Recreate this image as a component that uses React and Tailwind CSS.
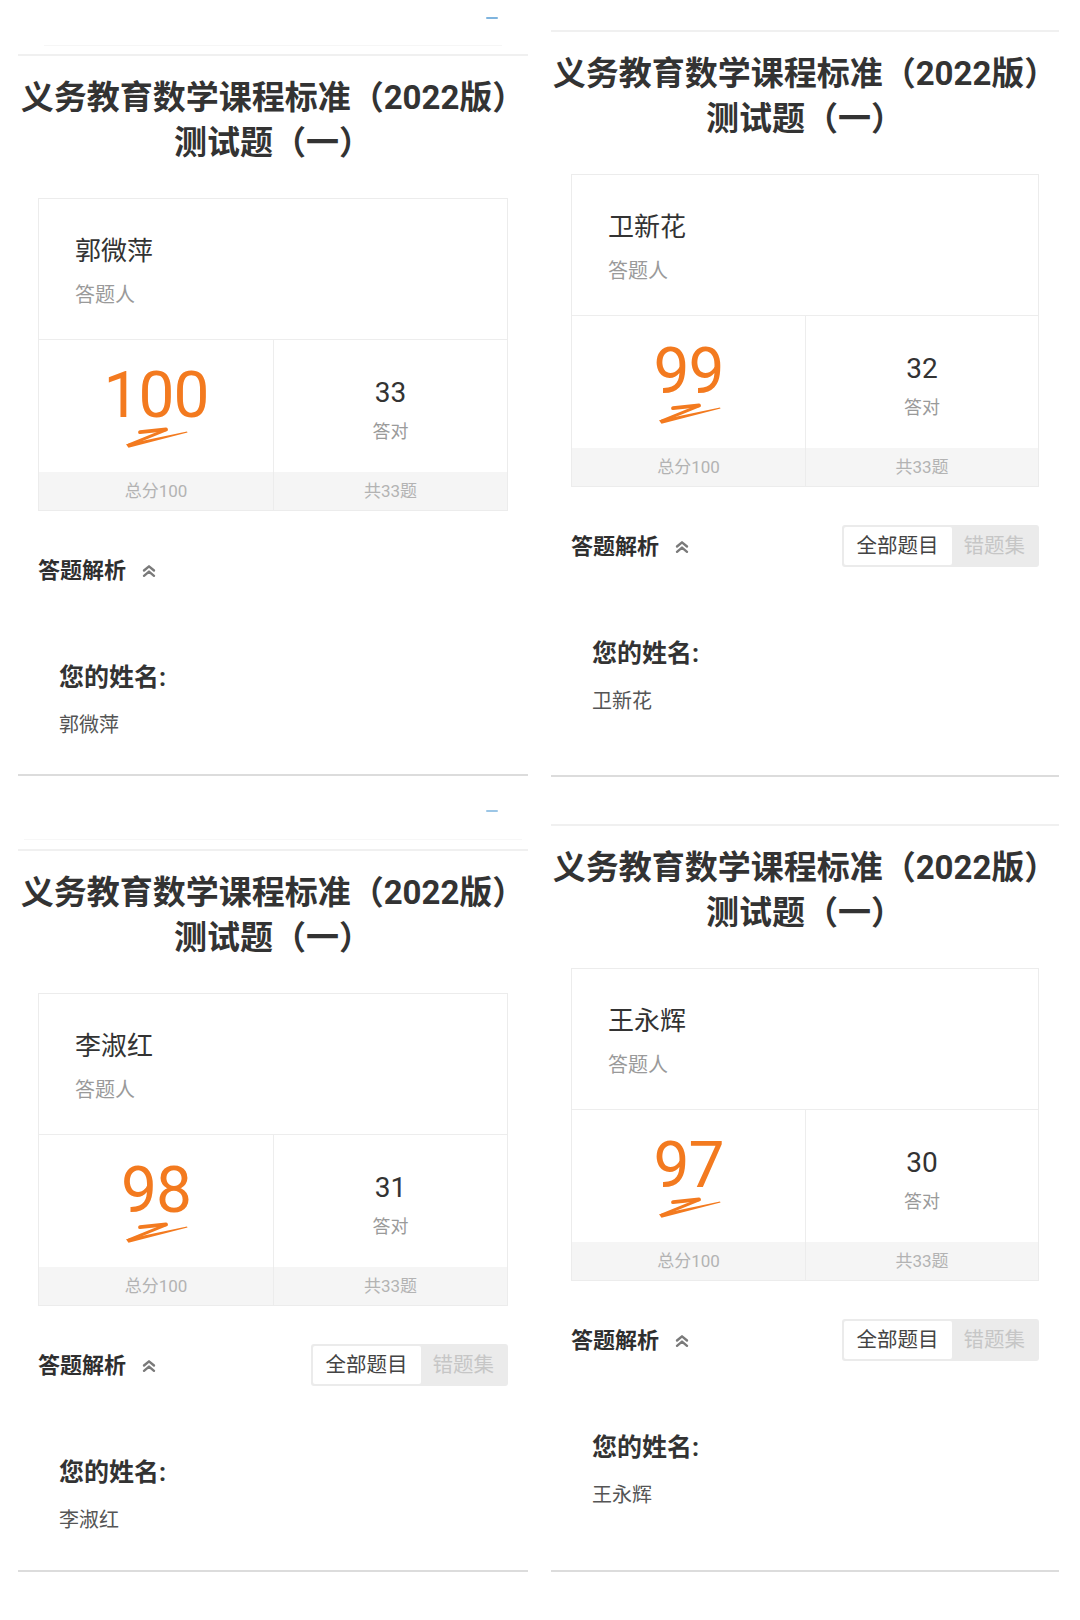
import React from "react";

const ORANGE = "#f37a1f";

// Orange tick under the score
function Scribble() {
    return (
        <svg width="66" height="24" viewBox="0 0 66 24" className="mx-auto -mt-[3px] block">
            <path d="M17 7.2 L43 4.4" stroke={ORANGE} strokeWidth="3.8" strokeLinecap="round" fill="none" />
            <path d="M43 4.8 L6 19.8" stroke={ORANGE} strokeWidth="3" strokeLinecap="round" fill="none" />
            <path d="M3 19.2 L64 6.4 L64.5 7.4 L5.5 22.8 Z" fill={ORANGE} />
        </svg>
    );
}

function ChevronsUp() {
    return (
        <svg width="16" height="16" viewBox="0 0 16 16" fill="none" stroke="#7a7a7a" strokeWidth="2.4" strokeLinecap="round" strokeLinejoin="round">
            <path d="M3 7.5 L8 3.3 L13 7.5" />
            <path d="M3 12.8 L8 8.6 L13 12.8" />
        </svg>
    );
}

function Panel({ name, score, correct, showTabs, bottomPad }) {
    return (
        <div className="border-t-2 border-b-2 border-t-[#f0f0f0] border-b-[#dcdcdc]" style={{ paddingBottom: bottomPad }}>
            {/* title */}
            <div className="pt-[19px] text-center text-[33px] leading-[45px] font-bold text-[#333]">
                <div>义务教育数学课程标准（2022版）</div>
                <div>测试题（一）</div>
            </div>

            {/* result card */}
            <div className="mx-5 mt-[33px] border border-[#ececec]">
                <div className="h-[141px] border-b border-[#ededed] pl-[36px] pt-[35px]">
                    <div className="text-[26px] leading-[35px] text-[#333]">{name}</div>
                    <div className="mt-[12px] text-[20px] leading-[28px] text-[#9a9a9a]">答题人</div>
                </div>
                <div className="grid h-[132px] grid-cols-2">
                    <div className="pt-[24px] text-center">
                        <div className="text-[64px] leading-[64px] tracking-[-1px]" style={{ color: ORANGE }}>{score}</div>
                        <Scribble />
                    </div>
                    <div className="border-l border-[#ededed] pt-[35px] text-center">
                        <div className="text-[28px] leading-[36px] text-[#333]">{correct}</div>
                        <div className="mt-[8px] text-[18px] leading-[26px] text-[#9a9a9a]">答对</div>
                    </div>
                </div>
                <div className="grid h-[38px] grid-cols-2 bg-[#f5f5f5] text-[17px] leading-[38px] text-[#b3b3b3] text-center">
                    <div>总分100</div>
                    <div className="border-l border-[#ececec]">共33题</div>
                </div>
            </div>

            {/* answer analysis header */}
            <div className="mx-5 mt-[38px] flex h-[42px] items-center justify-between">
                <div className="flex items-center">
                    <span className="text-[22px] font-bold text-[#2f2f2f]">答题解析</span>
                    <span className="ml-[15px] mt-[2px]"><ChevronsUp /></span>
                </div>
                {showTabs && (
                    <div className="flex rounded-[3px] bg-[#ebebeb] p-[2px] text-[20.5px] leading-[38px]">
                        <div className="rounded-[2px] bg-white px-[13px] text-[#444]">全部题目</div>
                        <div className="px-[12px] text-[#c6c6c6]">错题集</div>
                    </div>
                )}
            </div>

            {/* first question */}
            <div className="px-[41px]">
                <div className="mt-[70px] text-[25px] leading-[34px] font-bold text-[#333]">您的姓名:</div>
                <div className="mt-[16px] text-[20px] leading-[28px] text-[#555]">{name}</div>
            </div>
        </div>
    );
}

export default function App() {
    return (
        <div className="flex h-[1620px] w-[1080px] bg-white pl-[18px] font-['Roboto','Noto_Sans_CJK_SC',sans-serif]">
            {/* left column */}
            <div className="w-[510px]">
                <div className="flex h-[54px] flex-col">
                    <div className="flex h-[45px] justify-end pr-[30px] pt-[17px]">
                        <span className="h-[2px] w-[12px] rounded-full bg-[#7fb4de]" />
                    </div>
                    <div className="mx-[26px] h-px bg-[#f6f6f6]" />
                </div>
                <Panel name="郭微萍" score={100} correct={33} showTabs={false} bottomPad={35} />
                <div className="flex h-[73px] flex-col">
                    <div className="flex h-[63px] justify-end pr-[30px] pt-[34px]">
                        <span className="h-[2px] w-[12px] rounded-full bg-[#9cc6e6]" />
                    </div>
                    <div className="mx-[6px] h-px bg-[#f7f7f7]" />
                </div>
                <Panel name="李淑红" score={98} correct={31} showTabs={true} bottomPad={36} />
            </div>

            {/* right column */}
            <div className="ml-[23px] w-[508px]">
                <div className="h-[30px]" />
                <Panel name="卫新花" score={99} correct={32} showTabs={true} bottomPad={60} />
                <div className="h-[47px]" />
                <Panel name="王永辉" score={97} correct={30} showTabs={true} bottomPad={61} />
            </div>
        </div>
    );
}
